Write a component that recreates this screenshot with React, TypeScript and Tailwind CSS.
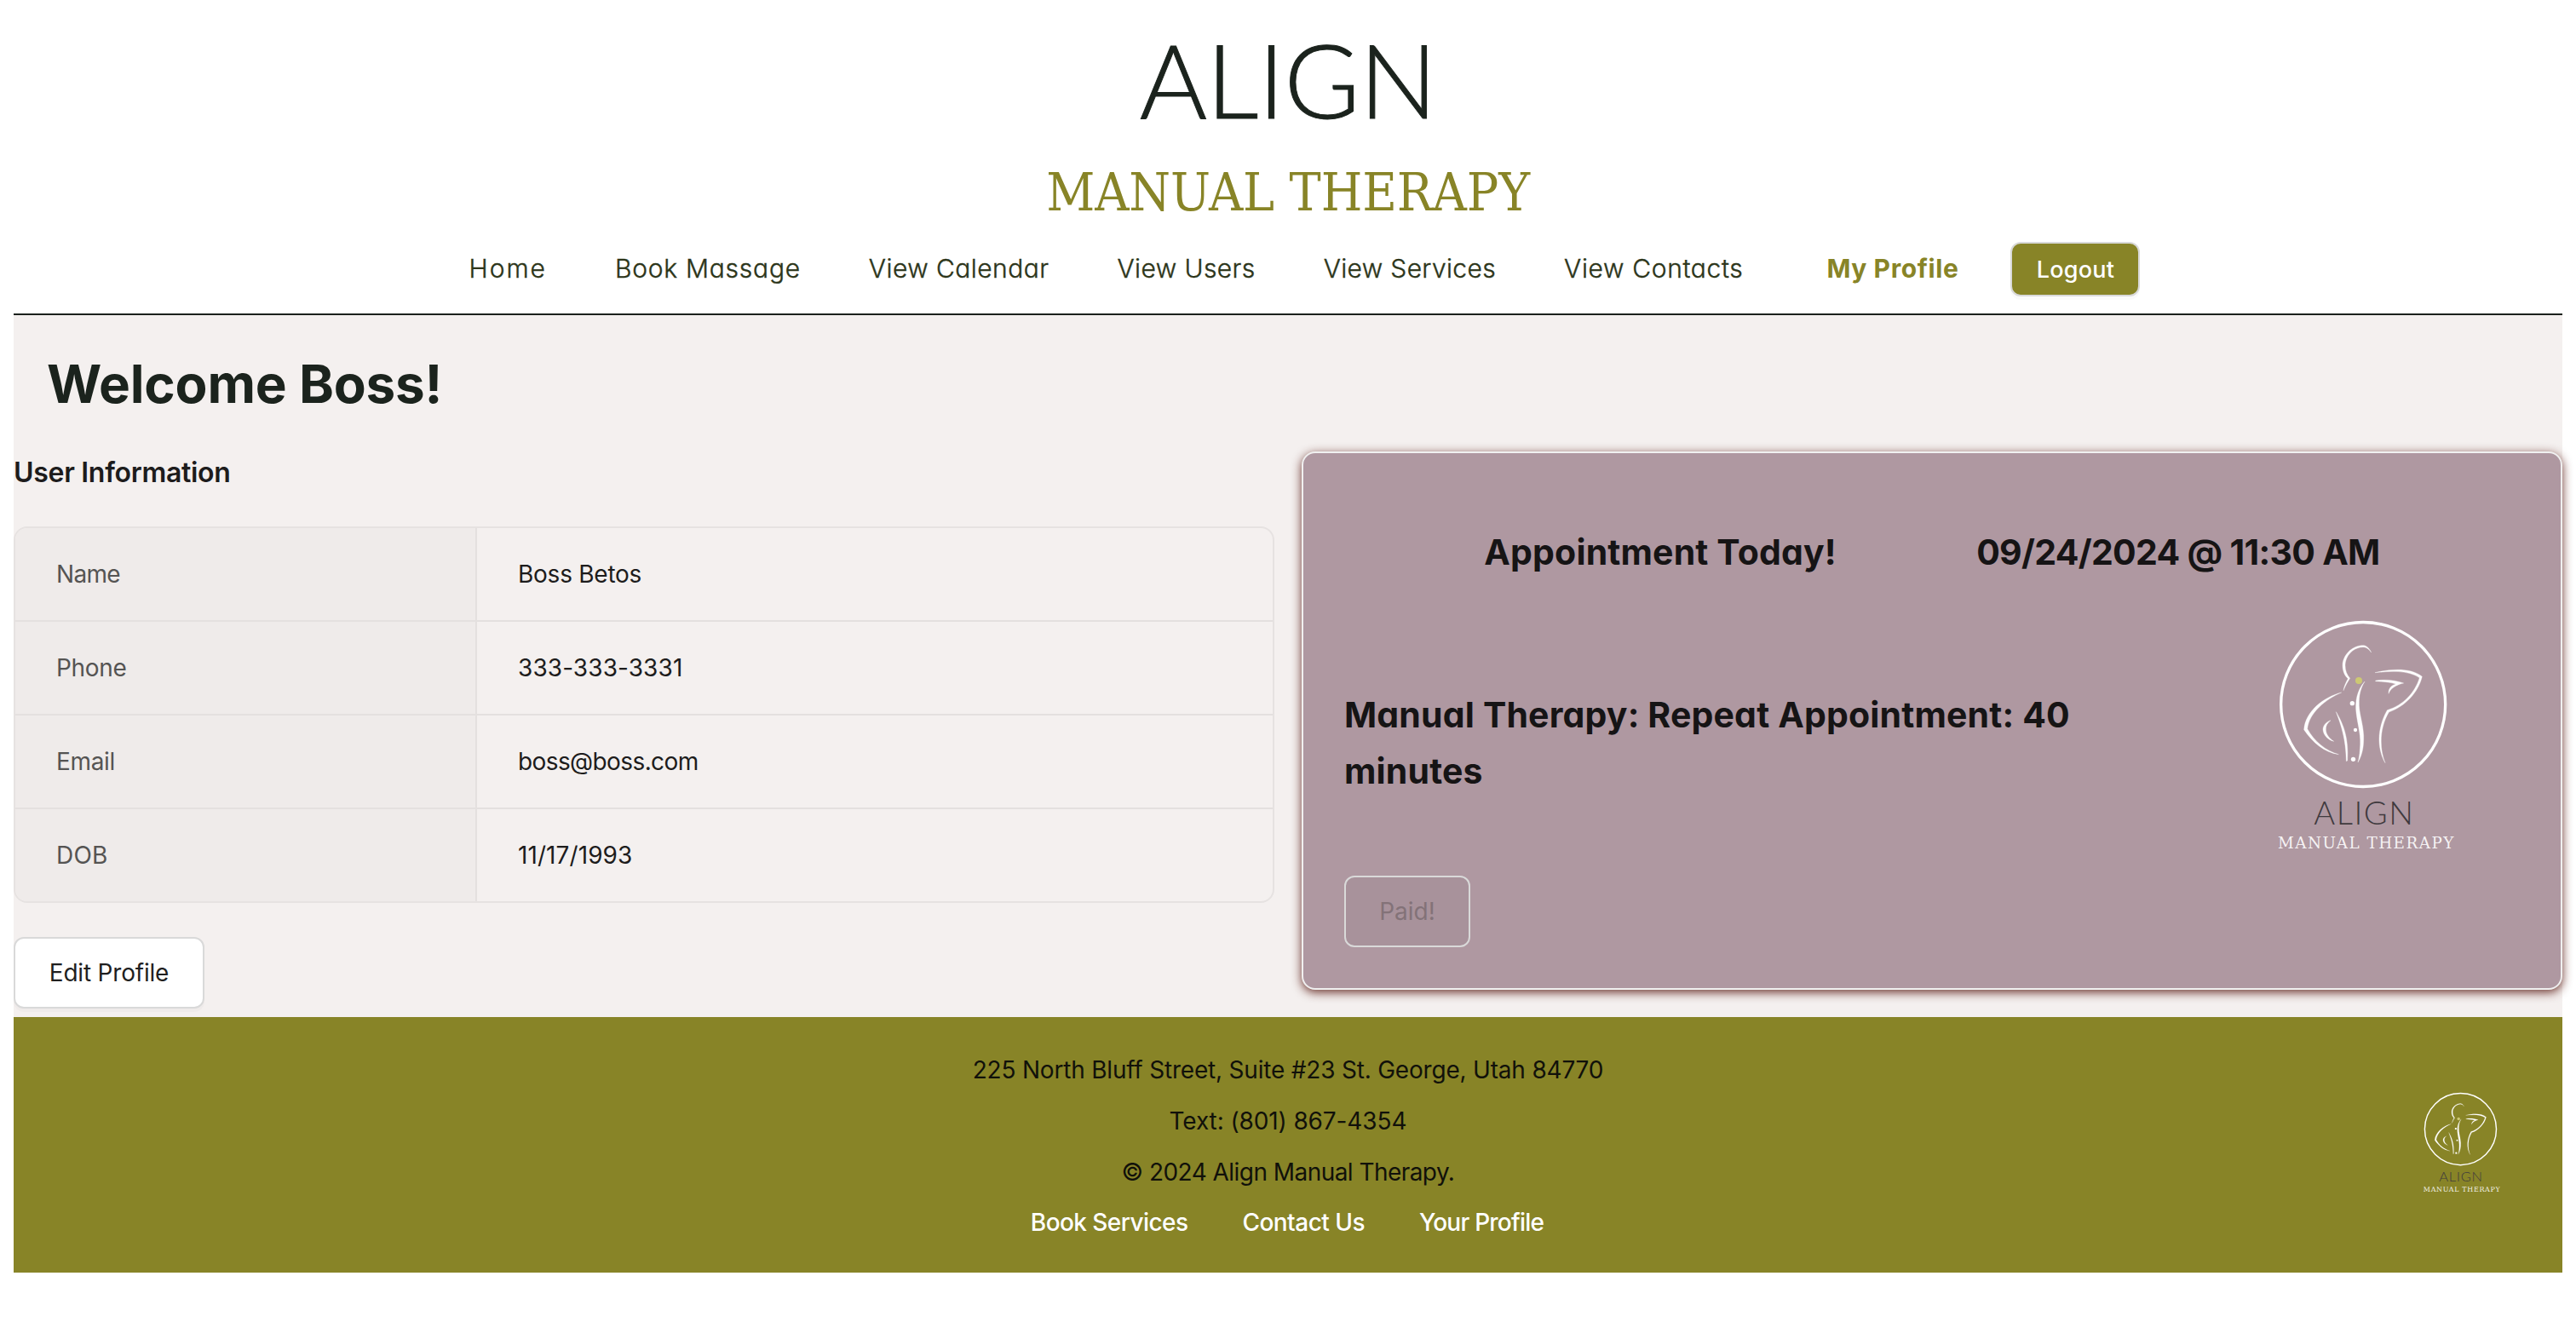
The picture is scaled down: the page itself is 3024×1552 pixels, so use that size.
const navItems = [
  { label: "Home", tracking: "tracking-[1.94px]" },
  { label: "Book Massage", tracking: "tracking-[0.75px]" },
  { label: "View Calendar", tracking: "tracking-[0.45px]" },
  { label: "View Users", tracking: "tracking-[0.4px]" },
  { label: "View Services", tracking: "tracking-[0.35px]" },
  { label: "View Contacts", tracking: "tracking-[0.65px]" },
];

const userRows = [
  { label: "Name", labelTracking: "tracking-[-0.7px]", value: "Boss Betos", valueTracking: "tracking-[-0.25px]" },
  { label: "Phone", labelTracking: "tracking-[-0.3px]", value: "333-333-3331", valueTracking: "tracking-[0.1px]" },
  { label: "Email", labelTracking: "tracking-[-0.32px]", value: "boss@boss.com", valueTracking: "tracking-[-0.6px]" },
  { label: "DOB", labelTracking: "tracking-[0.2px]", value: "11/17/1993", valueTracking: "tracking-[0.08px]" },
];

// Round, single-storey letterforms for headings and navigation.
const rounded = "font-['Inter',sans-serif] [font-feature-settings:'cv11']";

function Logo({ className }: { className: string }) {
  return (
    <svg viewBox="0 0 840 960" className={className} fill="#fff" aria-label="Align Manual Therapy">
      <circle cx="402.5" cy="381" r="289.5" fill="none" stroke="#fff" strokeWidth="10" />
      <g stroke="#fff" strokeWidth="1">
        <path d="M431 198C422 179 412 173 402 173C361 173 330 210 330 243C330 262 337 280 349 290C342 303 335 317 333 332C340 315 348 301 356 289C345 276 339 262 339 243C339 212 365 180 402 179C413 179 422 185 431 198Z" />
        <path d="M326 339C265 354 198 405 194 470C225 515 265 550 316 557C270 544 230 510 206 467C212 410 270 363 326 339Z" />
        <path d="M288 437C268 444 261 458 261 470C263 490 279 506 299 511C283 500 272 487 271 470C270 457 276 446 288 437Z" />
        <path d="M307 407C323 450 342 500 343 581L347 579C352 500 334 452 307 407Z" />
        <path d="M408 300C380 332 374 370 378 410C384 460 397 490 391 540C390 558 388 570 384 585C400 557 405 530 404 490C402 445 386 410 388 370C389 340 396 320 408 300Z" />
        <path d="M444 269C500 255 572 251 610 283C596 340 550 388 493 408C462 460 457 530 480 587C448 530 454 460 487 401C543 384 585 340 601 287C557 259 500 264 444 269Z" />
        <path d="M446 297C480 292 515 295 545 306C518 312 498 325 492 343C491 325 501 314 518 309C495 302 470 301 446 299Z" />
      </g>
      <circle cx="387" cy="297" r="12" fill="#cdc873" />
      <circle cx="364" cy="377" r="8" />
      <circle cx="375" cy="471" r="6.5" />
      <circle cx="367.5" cy="574" r="8" />
      <text x="229" y="804" textLength="350" fill="#3f3a3e" className="font-['Lato',sans-serif] text-[114px] font-light">
        ALIGN
      </text>
      <text x="102" y="889" textLength="619" fillOpacity="0.9" className="font-['DejaVu_Serif',serif] text-[55px]">
        MANUAL THERAPY
      </text>
    </svg>
  );
}

function Header() {
  return (
    <header className="flex flex-col items-center border-b-2 border-[#1b211c] pt-[22px] pb-5">
      <h1 className="font-['Lato',sans-serif] text-[121px] leading-[141px] font-light tracking-[-0.75px] text-[#1b231d] [-webkit-text-stroke:1px_#1b231d]">
        ALIGN
      </h1>
      <h2 className="mt-[30px] font-['DejaVu_Serif_Condensed','DejaVu_Serif',serif] text-[62px] leading-[65px] [font-stretch:condensed] tracking-[-0.14px] text-[#888427]">
        MANUAL THERAPY
      </h2>
      <nav className={`${rounded} mt-[26px] flex h-16 items-start gap-20 pl-[39px] text-[30px] leading-[62px] whitespace-nowrap`}>
        {navItems.map((item) => (
          <a key={item.label} className={`${item.tracking} font-light text-[#2c351a] [-webkit-text-stroke:0.4px_#2c351a]`}>
            {item.label}
          </a>
        ))}
        <a className="ml-[18px] font-bold tracking-[0.59px] text-[#888427]">My Profile</a>
        <button className="-ml-[19px] h-16 w-[152px] rounded-xl border-2 border-[#d9d9d9] bg-[#888427] text-[27px] leading-[61px] font-medium tracking-[0.23px] text-white shadow-[0_4px_0_rgba(0,0,0,0.02)]">
          Logout
        </button>
      </nav>
    </header>
  );
}

function UserInformation() {
  return (
    <section className="w-[1480px] text-[28px]">
      <h3 className="mb-[39px] text-[32px] leading-[49px] font-semibold tracking-[-0.3px] text-[#1d1c1c]">User Information</h3>
      <dl className="overflow-hidden rounded-2xl border-2 border-[#e6e2e1]">
        {userRows.map((row) => (
          <div key={row.label} className="flex h-[110px] border-b-2 border-[#e4e0df] last:h-[108px] last:border-b-0">
            <dt className={`${row.labelTracking} flex w-[542px] items-center border-r-2 border-[#e4e0df] bg-[#efebea] pl-12 text-[#555453]`}>
              {row.label}
            </dt>
            <dd className={`${row.valueTracking} flex flex-1 items-center pl-12 text-[#1d1c1c]`}>{row.value}</dd>
          </div>
        ))}
      </dl>
      <button className="mt-10 block h-[84px] w-56 rounded-xl border-2 border-[#d9d9d9] bg-white tracking-[-0.2px] text-[#1f1f1f] shadow-[0_4px_0_rgba(0,0,0,0.02)]">
        Edit Profile
      </button>
    </section>
  );
}

function AppointmentCard() {
  return (
    <section className="h-[632px] w-[1480px] rounded-2xl border-2 border-[#f0f0f0] bg-[#af98a1] px-12 pt-[83px] shadow-[0_3px_12px_rgba(92,30,22,0.9)]">
      <div className={`${rounded} flex justify-evenly text-[41px] leading-[66px] font-bold text-[#161415]`}>
        <h3 className="tracking-[0.15px]">Appointment Today!</h3>
        <h3 className="tracking-[-0.7px]">09/24/2024 @ 11:30 AM</h3>
      </div>
      <div className="mt-[19px] flex items-center justify-between">
        <h3 className={`${rounded} mt-[23px] w-[900px] text-[41px] leading-[66px] font-bold tracking-[0.16px] text-[#161415]`}>
          Manual Therapy: Repeat Appointment: 40 minutes
        </h3>
        <Logo className="mr-[38px] h-80 w-[280px]" />
      </div>
      <button disabled className="mt-2 block h-[84px] w-[148px] rounded-xl border-2 border-[#d9d9d9] bg-[#a8929b] text-[28px] text-[#837278]">
        Paid!
      </button>
    </section>
  );
}

function Footer() {
  return (
    <footer className="grid h-[300px] grid-cols-[1fr_auto_1fr] items-start bg-[#888427] text-[28px]">
      <div className="col-start-2 pt-8 text-center leading-[60px] text-[#11110a]">
        <p className="tracking-[-0.2px]">225 North Bluff Street, Suite #23 St. George, Utah 84770</p>
        <p className="tracking-[-0.11px]">Text: (801) 867-4354</p>
        <p className="tracking-[-0.55px]">© 2024 Align Manual Therapy.</p>
        <div className="-ml-0.5 flex justify-center gap-16 leading-[58px] font-medium text-white">
          <a className="tracking-[-0.57px]">Book Services</a>
          <a className="tracking-[-0.53px]">Contact Us</a>
          <a className="tracking-[-0.78px]">Your Profile</a>
        </div>
      </div>
      <Logo className="mt-[76px] mr-14 h-[140px] w-[122px] justify-self-end" />
    </footer>
  );
}

export default function App() {
  return (
    <div className="min-h-[1552px] bg-white px-4 font-['Inter',sans-serif]">
      <Header />
      <main className="bg-[#f4f0ef] pb-2.5">
        <h1 className={`${rounded} pt-[33px] pl-[39px] text-[62px] leading-[96px] font-bold tracking-[-0.22px] text-[#1b231d]`}>
          Welcome Boss!
        </h1>
        <div className="mt-[31px] flex items-start gap-8">
          <UserInformation />
          <AppointmentCard />
        </div>
      </main>
      <Footer />
    </div>
  );
}
